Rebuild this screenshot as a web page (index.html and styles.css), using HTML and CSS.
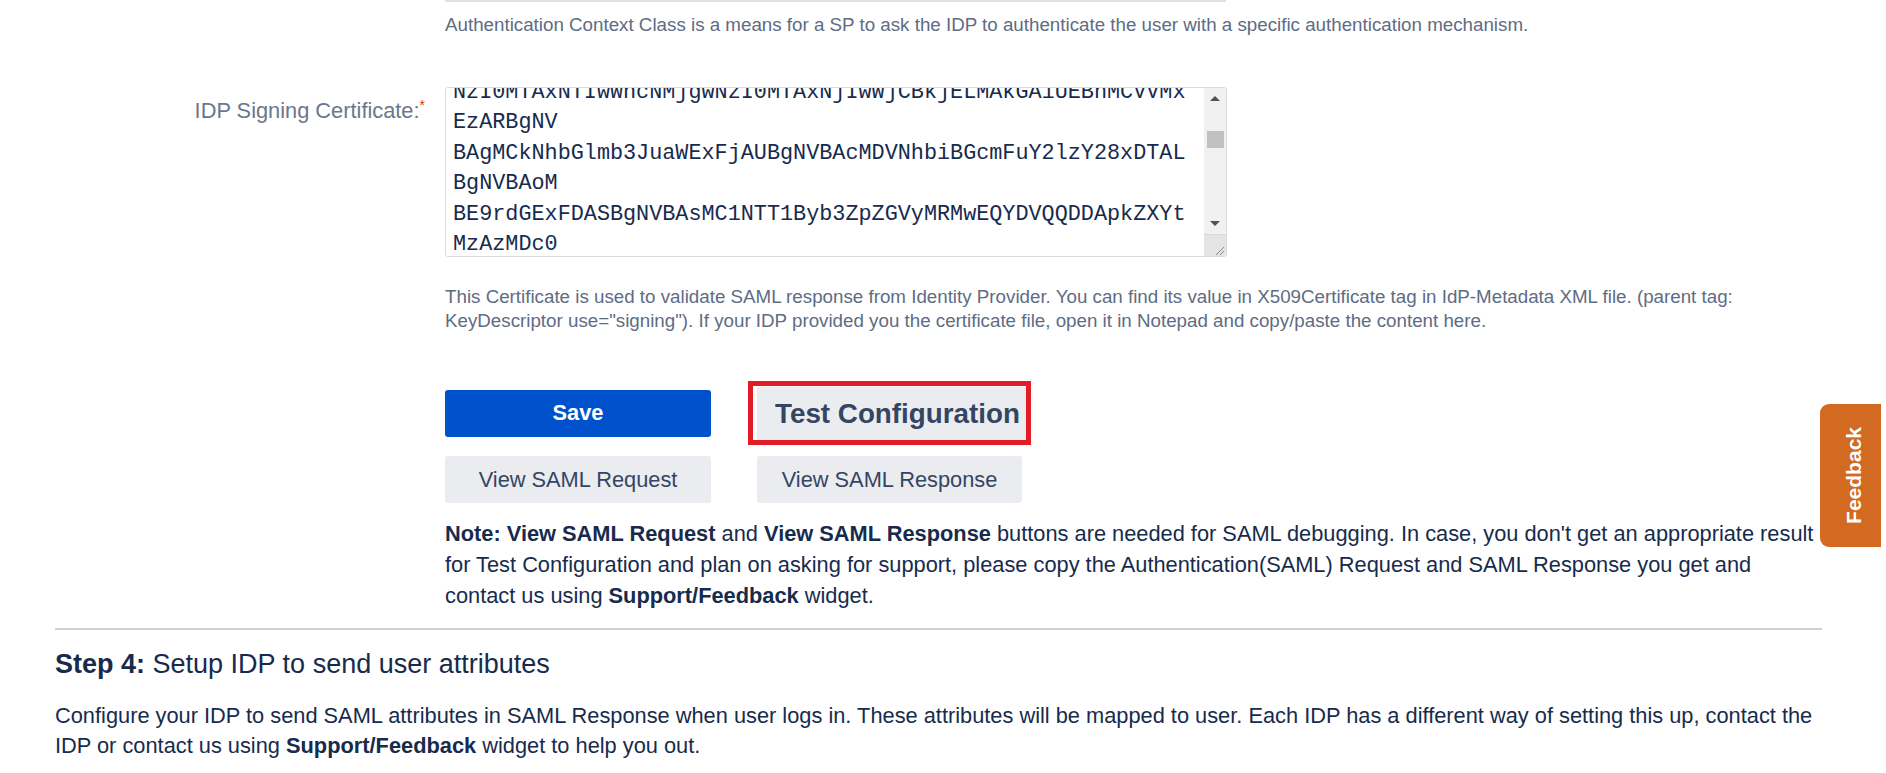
FILE: index.html
```html
<!DOCTYPE html>
<html lang="en">
<head>
    <meta charset="UTF-8">
    <meta name="viewport" content="width=device-width, initial-scale=1.0">
    <title>Configure Service Provider</title>
    <link rel="stylesheet" href="styles.css">
</head>
<body>
<div class="content">
    <div class="field">
        <div class="field-label"></div>
        <div class="field-input">
            <div class="prev-input"></div>
            <div class="description top-desc">Authentication Context Class is a means for a SP to ask the IDP to authenticate the user with a specific authentication mechanism.</div>
        </div>
    </div>

    <div class="field cert-field">
        <label class="field-label">IDP Signing Certificate:<span class="req">*</span></label>
        <div class="field-input">
            <div class="textarea">
                <div class="ta-text"><pre>NzI0MTAxNTIwWhcNMjgwNzI0MTAxNjIwWjCBkjELMAkGA1UEBhMCVVMx
EzARBgNV
BAgMCkNhbGlmb3JuaWExFjAUBgNVBAcMDVNhbiBGcmFuY2lzY28xDTAL
BgNVBAoM
BE9rdGExFDASBgNVBAsMC1NTT1Byb3ZpZGVyMRMwEQYDVQQDDApkZXYt
MzAzMDc0
MTEcMBoGCSqGSIb3DQEJARYNaW5mb0Bva3RhLmNvbTCCASIwDQYJKoZI</pre></div>
                <div class="scrollbar">
                    <div class="sb-btn"><span class="arrow-up"></span></div>
                    <div class="sb-track"><div class="sb-thumb"></div></div>
                    <div class="sb-btn"><span class="arrow-down"></span></div>
                    <div class="resizer">
                        <svg width="22" height="22" viewBox="0 0 22 22">
                            <line x1="20" y1="12" x2="12" y2="20" stroke="#8a8a8a" stroke-width="1"/>
                            <line x1="20" y1="16" x2="16" y2="20" stroke="#8a8a8a" stroke-width="1"/>
                        </svg>
                    </div>
                </div>
            </div>
            <div class="description cert-desc">This Certificate is used to validate SAML response from Identity Provider. You can find its value in X509Certificate tag in IdP-Metadata XML file. (parent tag: KeyDescriptor use="signing"). If your IDP provided you the certificate file, open it in Notepad and copy/paste the content here.</div>

            <div class="buttons">
                <button class="btn btn-primary" type="button">Save</button>
                <div class="test-wrap">
                    <button class="btn btn-test" type="button">Test Configuration</button>
                </div>
                <button class="btn btn-default" type="button">View SAML Request</button>
                <button class="btn btn-default" type="button">View SAML Response</button>
            </div>

            <p class="note"><b>Note: View SAML Request</b> and <b>View SAML Response</b> buttons are needed for SAML debugging. In case, you don't get an appropriate result<br>for Test Configuration and plan on asking for support, please copy the Authentication(SAML) Request and SAML Response you get and<br>contact us using <b>Support/Feedback</b> widget.</p>
        </div>
    </div>

    <hr class="divider">

    <h3 class="step-title"><b>Step 4:</b> Setup IDP to send user attributes</h3>
    <p class="step-text">Configure your IDP to send SAML attributes in SAML Response when user logs in. These attributes will be mapped to user. Each IDP has a different way of setting this up, contact the<br>IDP or contact us using <b>Support/Feedback</b> widget to help you out.</p>
</div>

<div class="feedback-tab"><span>Feedback</span></div>
</body>
</html>
```

FILE: styles.css
```css
body {
    margin: 0;
    font-family: "Liberation Sans", Arial, sans-serif;
    color: #172b4d;
    background: #fff;
}
.content {
    width: 1767px;
    padding-left: 55px;
}
.field {
    display: grid;
    grid-template-columns: 390px 1fr;
}
.field-label {
    text-align: right;
    padding: 9px 20px 0 0;
    font-size: 21.8px;
    line-height: 30px;
    color: #6b778c;
}
.req {
    color: #de350b;
    font-size: 14px;
    vertical-align: super;
    line-height: 0;
}
.prev-input {
    width: 781px;
    height: 2px;
    background: #dfe1e6;
}
.description {
    font-size: 18.75px;
    line-height: 24px;
    color: #5e6c84;
}
.top-desc {
    margin-top: 11px;
}
.cert-field {
    margin-top: 50px;
}

/* textarea look-alike, scrolled a bit down */
.textarea {
    display: flex;
    width: 780px;
    height: 168px;
    border: 1px solid #d9dce1;
    border-radius: 3px;
    overflow: hidden;
    background: #fff;
}
.ta-text {
    flex: 1;
    overflow: hidden;
    padding-left: 7px;
}
.ta-text pre {
    margin: -10.5px 0 0;
    font-family: "Liberation Mono", "Courier New", monospace;
    font-size: 21.8px;
    line-height: 30.6px;
    color: #172b4d;
}
.scrollbar {
    width: 22px;
    display: flex;
    flex-direction: column;
    background: #f1f1f1;
}
.sb-btn {
    height: 21px;
    display: flex;
    align-items: center;
    justify-content: center;
}
.arrow-up, .arrow-down {
    width: 0;
    height: 0;
    border-left: 5px solid transparent;
    border-right: 5px solid transparent;
}
.arrow-up {
    border-bottom: 5px solid #505050;
}
.arrow-down {
    border-top: 5px solid #505050;
}
.sb-track {
    flex: 1;
    padding-top: 22px;
}
.sb-thumb {
    height: 17px;
    margin: 0 2px 0 3px;
    background: #c1c1c1;
}
.resizer {
    height: 22px;
    background: #e4e4e4;
    border-top: 1px dotted #cfcfcf;
    box-sizing: border-box;
}
.resizer svg {
    display: block;
}

.cert-desc {
    margin-top: 28px;
}
.buttons {
    display: grid;
    grid-template-columns: 266px 265px;
    column-gap: 46px;
    row-gap: 11px;
    align-items: center;
    margin-top: 48px;
}
.btn {
    height: 47px;
    border: none;
    border-radius: 3px;
    font-family: inherit;
    font-size: 21.8px;
    cursor: pointer;
}
.btn-primary {
    background: #0052cc;
    color: #fff;
    font-weight: bold;
}
.btn-default {
    background: #ebecf0;
    color: #344563;
}
.test-wrap {
    justify-self: start;
    margin-left: -9px;
    border: 5px solid #e31d26;
    padding: 1px 0 0 4px;
    background: #fff;
}
.btn-test {
    display: block;
    width: 269px;
    height: 53px;
    padding: 0 0 0 18px;
    text-align: left;
    white-space: nowrap;
    font-size: 27.8px;
    font-weight: bold;
    background: #ebecf0;
    color: #344563;
    border-radius: 0;
}
.note {
    margin: 15px 0 0;
    font-size: 21.8px;
    line-height: 31px;
    white-space: nowrap;
}
.divider {
    border: 0;
    height: 2px;
    background: #d2d2d2;
    margin: 17px 0 0;
}
.step-title {
    margin: 18px 0 0;
    font-size: 27px;
    line-height: 32px;
    font-weight: normal;
}
.step-text {
    margin: 21px 0 0;
    font-size: 21.8px;
    line-height: 30px;
    white-space: nowrap;
}

.feedback-tab {
    position: fixed;
    top: 404px;
    right: 5px;
    width: 61px;
    height: 143px;
    background: #d36a21;
    border-radius: 9px 0 0 9px;
    display: flex;
    align-items: center;
    justify-content: center;
    padding-left: 6px;
    box-sizing: border-box;
}
.feedback-tab span {
    writing-mode: vertical-rl;
    transform: rotate(180deg);
    color: #fff;
    font-weight: bold;
    font-size: 21px;
}
```
